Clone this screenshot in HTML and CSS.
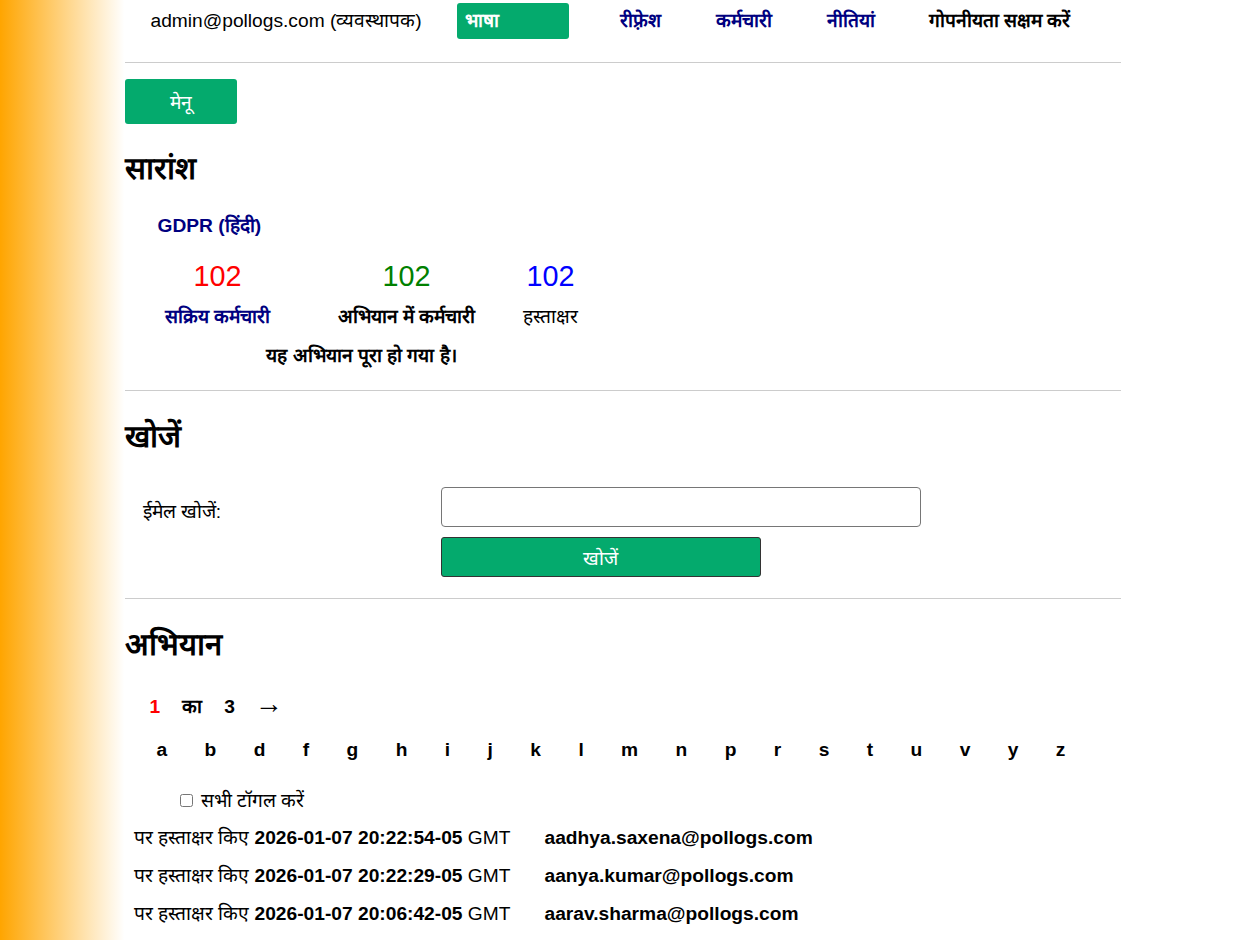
FILE: index.html
```html
<!DOCTYPE html>
<html lang="hi">

<head>
    <meta charset="UTF-8">
    <meta name="viewport" content="width=device-width, initial-scale=1.0">
    <title>सारांश</title>
    <link rel="stylesheet" href="styles.css">
</head>

<body>
    <div class="page">
        <div class="topbar">
            <span class="user">admin@pollogs.com (व्यवस्थापक)</span>
            <button class="lang-btn">भाषा</button>
            <a href="#" class="nav-link link-refresh">रीफ़्रेश</a>
            <a href="#" class="nav-link link-staff">कर्मचारी</a>
            <a href="#" class="nav-link link-policies">नीतियां</a>
            <a href="#" class="nav-link nav-dark">गोपनीयता सक्षम करें</a>
        </div>

        <hr>

        <button class="menu-btn">मेनू</button>

        <h2 class="summary-title">सारांश</h2>

        <a href="#" class="campaign-name">GDPR (हिंदी)</a>

        <table class="stats">
            <tr class="stat-nums">
                <td class="col-active num-red">102</td>
                <td class="col-campaign num-green">102</td>
                <td class="col-signed num-blue">102</td>
            </tr>
            <tr class="stat-labels">
                <td><a href="#">सक्रिय कर्मचारी</a></td>
                <td><b>अभियान में कर्मचारी</b></td>
                <td>हस्ताक्षर</td>
            </tr>
            <tr>
                <td colspan="3" class="done">यह अभियान पूरा हो गया है।</td>
            </tr>
        </table>

        <hr>

        <h2>खोजें</h2>

        <form class="search" onsubmit="return false">
            <label for="email">ईमेल खोजें:</label>
            <div class="search-fields">
                <input type="text" id="email">
                <button type="submit" class="search-btn">खोजें</button>
            </div>
        </form>

        <hr>

        <h2>अभियान</h2>

        <div class="pager">
            <span class="current">1</span>
            <span>का</span>
            <a href="#">3</a>
            <a href="#" class="arrow">&rarr;</a>
        </div>

        <div class="letters">
            <a href="#">a</a><a href="#">b</a><a href="#">d</a><a href="#">f</a><a href="#">g</a>
            <a href="#">h</a><a href="#">i</a><a href="#">j</a><a href="#">k</a><a href="#">l</a>
            <a href="#">m</a><a href="#">n</a><a href="#">p</a><a href="#">r</a><a href="#">s</a>
            <a href="#">t</a><a href="#">u</a><a href="#">v</a><a href="#">y</a><a href="#">z</a>
        </div>

        <label class="toggle-all"><input type="checkbox"> सभी टॉगल करें</label>

        <div class="signed-list">
            <div>पर हस्ताक्षर किए <b>2026-01-07 20:22:54-05</b> GMT</div>
            <div><b>aadhya.saxena@pollogs.com</b></div>
            <div>पर हस्ताक्षर किए <b>2026-01-07 20:22:29-05</b> GMT</div>
            <div><b>aanya.kumar@pollogs.com</b></div>
            <div>पर हस्ताक्षर किए <b>2026-01-07 20:06:42-05</b> GMT</div>
            <div><b>aarav.sharma@pollogs.com</b></div>
        </div>
    </div>
</body>

</html>
```

FILE: styles.css
```css
body {
    margin: 0;
    font-family: "Liberation Sans", Arial, sans-serif;
    font-size: 19.2px;
    color: #000;
    background: linear-gradient(to right, orange, #fff 10%);
    min-height: 100vh;
}

.page {
    width: 996px;
    margin: 0 auto;
    padding-left: 1px;
}

a {
    color: #000080;
    font-weight: bold;
    text-decoration: none;
}

hr {
    border: none;
    border-top: 1px solid #ccc;
    margin: 0;
}

button {
    font-family: inherit;
    font-size: 19.2px;
    cursor: pointer;
}

h2 {
    font-size: 31px;
    margin: 23px 0 0;
}

/* top bar */
.topbar {
    display: flex;
    align-items: center;
    height: 42px;
    margin-bottom: 20px;
}

.user {
    margin-left: 26px;
    margin-right: 35px;
    margin-top: -3px;
}

.lang-btn {
    width: 112px;
    height: 36px;
    background: #04aa6d;
    color: #fff;
    font-weight: bold;
    text-align: left;
    padding: 0 8px 4px;
    border: none;
    border-radius: 3px;
    margin-right: 51px;
}

.nav-link {
    margin-top: -3px;
}

.link-refresh {
    width: 96px;
}

.link-staff {
    width: 111px;
}

.link-policies {
    width: 102px;
}

.nav-dark {
    color: #000;
}

.menu-btn {
    display: block;
    width: 112px;
    height: 45px;
    margin-top: 16px;
    background: #04aa6d;
    color: #fff;
    border: none;
    border-radius: 3px;
}

/* summary */
.page > .summary-title {
    margin-top: 22px;
}

.campaign-name {
    display: block;
    margin: 23px 0 0 33px;
}

.stats {
    border-collapse: collapse;
    margin: 19px 0 16px 8px;
}

.stats td {
    text-align: center;
    padding: 0;
}

.stat-nums td {
    font-size: 28.8px;
    height: 39px;
}

.stat-labels td {
    height: 39px;
}

.done {
    font-weight: bold;
    height: 39px;
}

.col-active {
    width: 170px;
}

.col-campaign {
    width: 208px;
}

.col-signed {
    width: 80px;
}

.num-red {
    color: red;
}

.num-green {
    color: green;
}

.num-blue {
    color: blue;
}

/* search */
.search {
    display: flex;
    margin: 31px 0 21px;
}

.search label {
    width: 298px;
    padding-left: 18px;
    padding-top: 10px;
}

.search-fields {
    display: flex;
    flex-direction: column;
    gap: 10px;
}

.search input {
    width: 480px;
    height: 40px;
    box-sizing: border-box;
    border: 1px solid #767676;
    border-radius: 4px;
    font-size: 19.2px;
}

.search-btn {
    width: 320px;
    height: 40px;
    background: #04aa6d;
    color: #fff;
    border: 1px solid #333;
    border-radius: 3px;
}

/* campaign list */
.pager {
    display: flex;
    align-items: baseline;
    gap: 22px;
    margin: 28px 0 0 25px;
    font-weight: bold;
}

.pager a {
    color: #000;
}

.pager .current {
    color: red;
}

.pager .arrow {
    font-weight: normal;
    font-size: 28px;
    line-height: 20px;
    margin-left: -2px;
}

.letters {
    display: flex;
    gap: 37.4px;
    margin: 20px 0 0 32px;
}

.letters a {
    color: #000;
}

.toggle-all {
    display: block;
    margin: 25px 0 0 51px;
}

.signed-list {
    display: grid;
    grid-template-columns: 411px auto;
    align-items: baseline;
    row-gap: 11px;
    margin: 10px 0 0 9px;
}
```
